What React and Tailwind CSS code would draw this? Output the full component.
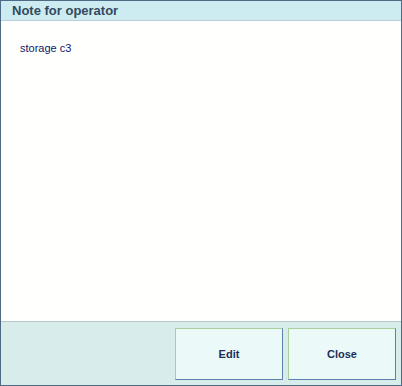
export default function App() {
  return (
    <div className="h-[386px] w-[402px] bg-white font-['Liberation_Sans',sans-serif]">
      <div className="flex h-full w-full flex-col border border-[#4e6a84]">
        <div className="flex h-[20px] shrink-0 items-center border-b border-[#b9cfdb] bg-[#cdecf1] pl-[11px]">
          <h1 className="text-[13px] font-bold leading-none text-[#34495e]">
            Note for operator
          </h1>
        </div>
        <div className="flex-1 bg-[#fffffd] px-[19px] pt-[22px]">
          <p className="text-[11px] leading-none text-[#10186a]">storage c3</p>
        </div>
        <div className="flex h-[64px] shrink-0 justify-end gap-[5px] border-t border-[#b7c9cd] bg-[#d8ecec] pr-[5px] pt-[6px]">
          <button className="h-[52px] w-[108px] border border-b-[#5b80a9] border-l-[#a6cf9c] border-r-[#5b80a9] border-t-[#a6cf9c] bg-[#ebf9f9] text-[11px] font-bold text-[#1b2f5a]">
            Edit
          </button>
          <button className="h-[52px] w-[108px] border border-b-[#5b80a9] border-l-[#a6cf9c] border-r-[#5b80a9] border-t-[#a6cf9c] bg-[#ebf9f9] text-[11px] font-bold text-[#1b2f5a]">
            Close
          </button>
        </div>
      </div>
    </div>
  );
}
